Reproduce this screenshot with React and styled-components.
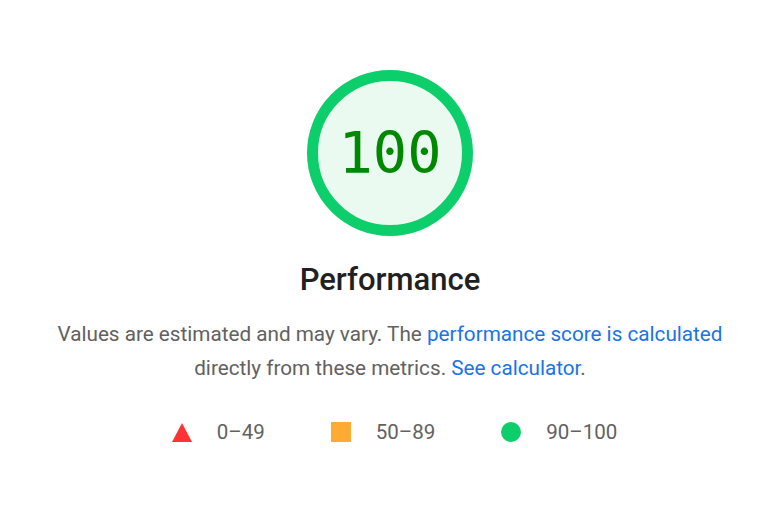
import React from 'react';
import styled, { createGlobalStyle } from 'styled-components';

const GlobalStyle = createGlobalStyle`
    html, body {
        margin: 0;
        background: #fff;
    }
    body {
        font-family: Roboto, "Liberation Sans", sans-serif;
    }
`;

const Page = styled.div`
    width: 780px;
    height: 510px;
    display: flex;
    flex-direction: column;
    align-items: center;
    padding-top: 70px;
    box-sizing: border-box;
`;

const Gauge = styled.div`
    width: 166px;
    height: 166px;
    box-sizing: border-box;
    border-radius: 50%;
    border: 11px solid #0cce6b;
    background: #eafaf1;
    display: flex;
    align-items: center;
    justify-content: center;
    color: #008800;
    font-family: "DejaVu Sans Mono", "Liberation Mono", monospace;
    font-size: 57px;
    line-height: 1;
`;

const Title = styled.h2`
    margin: 26px 0 0;
    font-size: 31px;
    font-weight: 500;
    color: #212121;
    line-height: 36px;
`;

const Description = styled.p`
    margin: 19px 0 0;
    font-size: 20.7px;
    line-height: 34px;
    color: #616161;
    text-align: center;
    width: 680px;
    a {
        color: #1a73e8;
        text-decoration: none;
    }
`;

const Legend = styled.div`
    margin: 35px 0 0 9px;
    display: flex;
    align-items: center;
    gap: 66px;
`;

const LegendItem = styled.div`
    display: flex;
    align-items: center;
    gap: 25px;
    font-size: 20.5px;
    color: #616161;
`;

const Triangle = styled.span`
    width: 0;
    height: 0;
    border-left: 10px solid transparent;
    border-right: 10px solid transparent;
    border-bottom: 19px solid #ff3333;
`;

const Square = styled.span`
    width: 20px;
    height: 20px;
    background: #ffaa33;
`;

const Dot = styled.span`
    width: 20px;
    height: 20px;
    border-radius: 50%;
    background: #0cce6b;
`;

export default function App() {
    return (
        <>
            <GlobalStyle />
            <Page>
                <Gauge>100</Gauge>
                <Title>Performance</Title>
                <Description>
                    Values are estimated and may vary. The <a href="#">performance score is calculated</a> directly from these metrics. <a href="#">See calculator</a>.
                </Description>
                <Legend>
                    <LegendItem><Triangle />0–49</LegendItem>
                    <LegendItem><Square />50–89</LegendItem>
                    <LegendItem><Dot />90–100</LegendItem>
                </Legend>
            </Page>
        </>
    );
}
